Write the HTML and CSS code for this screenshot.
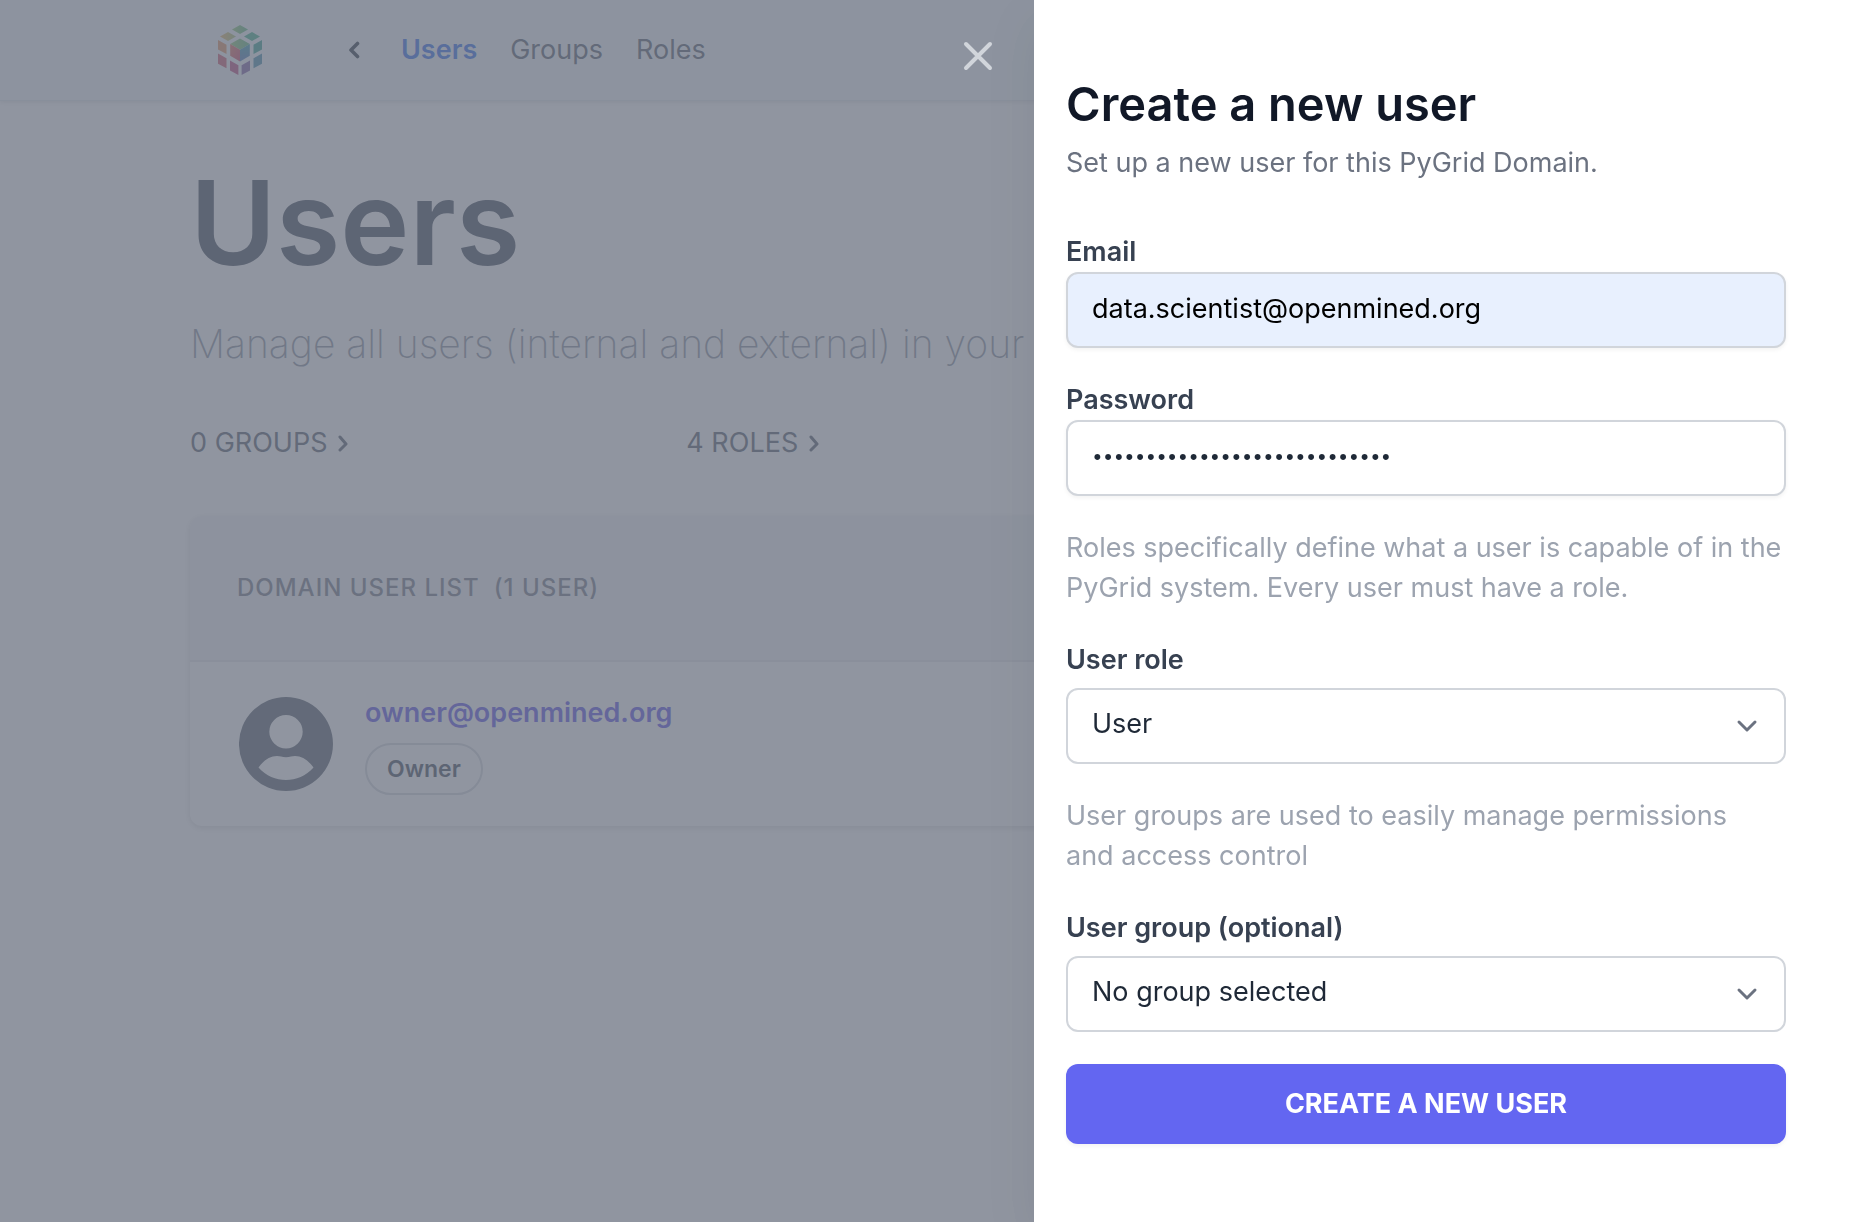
FILE: index.html
```html
<!DOCTYPE html>
<html lang="en">
<head>
<meta charset="utf-8">
<title>Users - PyGrid Domain</title>
<meta name="viewport" content="width=device-width, initial-scale=1">
<link rel="stylesheet" href="styles.css">
</head>
<body>
<div class="page">
  <header class="topbar">
    <a class="logo" href="#" aria-label="Home">
      <svg width="44" height="50" viewBox="0 0 44 50">
        <defs>
          <linearGradient id="lt" x1="0" x2="1"><stop offset="0" stop-color="#e8ae5c"/><stop offset="1" stop-color="#9cc070"/></linearGradient>
          <linearGradient id="tt" x1="0" x2="1"><stop offset="0" stop-color="#8cc46c"/><stop offset="1" stop-color="#52b47c"/></linearGradient>
          <linearGradient id="cl" x1="0" x2="1" y2="1"><stop offset="0" stop-color="#e07058"/><stop offset="1" stop-color="#c83c64"/></linearGradient>
          <linearGradient id="cr" x1="0" x2="0" y2="1"><stop offset="0" stop-color="#2c98a8"/><stop offset="1" stop-color="#4870b8"/></linearGradient>
        </defs>
        <path fill="url(#tt)" d="M22 0l8 4.500-8 4.500-8-4.500z"/>
        <path fill="url(#lt)" d="M10 7l8 4.500-8 4.500-8-4.500z"/>
        <path fill="#38ac84" d="M34 7l8 4.500-8 4.500-8-4.500z"/>
        <path fill="url(#tt)" d="M22 13.500l9.800 5.500-9.800 5.700-9.800-5.700z"/>
        <path fill="url(#cl)" d="M12.200 19l9.800 5.700v11.800l-9.800-5.800z"/>
        <path fill="url(#cr)" d="M31.800 19L22 24.700v11.800l9.800-5.800z"/>
        <path fill="#e08c58" d="M0 15l8.500 4.700v9.300L0 24.400z"/>
        <path fill="#cc5068" d="M0 28.600l8.500 4.700v10L0 38.700z"/>
        <path fill="#b84078" d="M12 35.500l8.400 4.700V50L12 45.400z"/>
        <path fill="#7858a0" d="M32 35.500l-8.400 4.700V50l8.400-4.600z"/>
        <path fill="#3c88a8" d="M44 28.600l-8.500 4.700v10l8.500-4.600z"/>
        <path fill="#2c9c8c" d="M44 15l-8.500 4.700v9.300l8.500-4.600z"/>
      </svg>
    </a>
    <nav class="nav">
      <a class="nav-back" href="#" aria-label="Back">
        <svg width="12" height="18" viewBox="0 0 12 18"><path d="M9.500 2.500L3 9l6.500 6.500" fill="none" stroke="currentColor" stroke-width="3.600" stroke-linecap="round" stroke-linejoin="round"/></svg>
      </a>
      <a class="nav-link is-active" href="#">Users</a>
      <a class="nav-link" href="#">Groups</a>
      <a class="nav-link" href="#">Roles</a>
    </nav>
  </header>
  <main class="content">
    <h1 class="title">Users</h1>
    <p class="lead">Manage all users (internal and external) in your domain</p>
    <div class="stats">
      <a class="stat" href="#">0 GROUPS
        <svg width="12" height="18" viewBox="0 0 12 18"><path d="M3 3l6 7-6 6" fill="none" stroke="currentColor" stroke-width="3" stroke-linecap="round" stroke-linejoin="round"/></svg></a>
      <a class="stat" href="#">4 ROLES
        <svg width="12" height="18" viewBox="0 0 12 18"><path d="M3 3l6 7-6 6" fill="none" stroke="currentColor" stroke-width="3" stroke-linecap="round" stroke-linejoin="round"/></svg></a>
    </div>
    <section class="card">
      <h2 class="card-head"><span>Domain user list</span><span>(1 user)</span></h2>
      <div class="user">
        <svg class="avatar" width="94" height="94" viewBox="0 0 94 94"><path fill="currentColor" fill-rule="evenodd" d="M47 0a47 47 0 1 0 0 94 47 47 0 0 0 0-94zm0 18a16.700 16.700 0 1 1 0 33.400A16.700 16.700 0 0 1 47 18zM19.500 70.500C25 63 31 59 38 59c3 0 5 1.200 9 1.200S53 59 56 59c7 0 13 4 18.500 11.500C67 79 57 83 47 83s-20-4-27.500-12.500z"/></svg>
        <div class="user-info">
          <a class="user-mail" href="#">owner@openmined.org</a>
          <span class="badge">Owner</span>
        </div>
      </div>
    </section>
  </main>
</div>

<div class="overlay">
  <button class="close" type="button" aria-label="Close panel">
    <svg width="32" height="32" viewBox="0 0 32 32"><path d="M4 4l24 24M28 4L4 28" stroke="currentColor" stroke-width="4" stroke-linecap="round"/></svg>
  </button>
  <aside class="drawer" role="dialog" aria-labelledby="drawer-title">
    <h2 class="drawer-title" id="drawer-title">Create a new user</h2>
    <p class="drawer-sub">Set up a new user for this PyGrid Domain.</p>
    <form class="form">
      <div class="field">
        <label for="email">Email</label>
        <input class="control control-filled" id="email" type="email" value="data.scientist@openmined.org">
      </div>
      <div class="field">
        <label for="password">Password</label>
        <input class="control control-password" id="password" type="password" value="abcdefghijklmnopqrstuvwxyz12">
      </div>
      <p class="help">Roles specifically define what a user is capable of in the PyGrid system. Every user must have a role.</p>
      <div class="field field-select">
        <label for="role">User role</label>
        <select class="control" id="role"><option>User</option></select>
      </div>
      <p class="help">User groups are used to easily manage permissions and&nbsp;access control</p>
      <div class="field field-select">
        <label for="group">User group (optional)</label>
        <select class="control" id="group"><option>No group selected</option></select>
      </div>
      <button class="submit" type="submit">CREATE A NEW USER</button>
    </form>
  </aside>
</div>
</body>
</html>
```

FILE: styles.css
```css
* { box-sizing: border-box; margin: 0; }
body {
  font-family: Inter, Roboto, sans-serif;
  font-size: 27px;
  line-height: 40px;
  color: #1f2937;
  background: #fff;
}
a { color: inherit; text-decoration: none; }
svg { display: block; flex: none; }
.page { height: 100vh; overflow: hidden; }

.topbar {
  display: flex;
  align-items: center;
  height: 101px;
  padding: 0 218px;
  background: #f3f8fb;
  border-bottom: 1px solid #e0e5ea;
  box-shadow: 0 2px 4px rgba(0, 0, 0, .1);
}
.nav { display: flex; align-items: center; gap: 33px; margin-left: 86px; color: #4b5563; }
.nav-back { margin-right: 8px; color: #1f2937; }
.is-active { color: #2563eb; font-weight: 600; }

.content { padding: 62px 190px; }
.title { font-size: 117px; line-height: 120px; font-weight: 600; color: #374151; }
.lead { margin-top: 33px; font-size: 39px; line-height: 56px; font-weight: 250; color: #858d9a; white-space: nowrap; }
.stats { display: grid; grid-template-columns: repeat(3, 1fr); gap: 20px; margin-top: 51px; color: #4b5563; }
.stat { display: flex; align-items: center; gap: 10px; }

.card { margin-top: 53px; border-radius: 12px; background: #fff; box-shadow: 0 2px 6px rgba(0, 0, 0, .15); }
.card-head {
  display: flex;
  align-items: center;
  gap: 14px;
  height: 146px;
  padding: 0 47px;
  border-bottom: 2px solid #e5e7eb;
  border-radius: 12px 12px 0 0;
  background: #f3f4f6;
  color: #6b7280;
  font-size: 24px;
  font-weight: 500;
  letter-spacing: 1px;
  text-transform: uppercase;
}
.user { display: flex; align-items: center; gap: 32px; padding: 31px 49px; color: #4b5563; }
.user-info { display: flex; flex-direction: column; align-items: flex-start; gap: 10px; }
.user-mail { color: #4f46e5; font-weight: 600; }
.badge {
  padding: 6px 20px;
  border: 2px solid #d1d5db;
  border-radius: 26px;
  color: #374151;
  font-size: 23px;
  line-height: 36px;
  font-weight: 600;
}

.overlay {
  position: fixed;
  inset: 0;
  display: flex;
  justify-content: flex-end;
  align-items: flex-start;
  background: rgba(107, 114, 128, .75);
}
.close { margin: 40px 40px 0 0; padding: 0; border: 0; background: none; color: #d1d5db; }
.drawer {
  width: 815px;
  max-width: 100%;
  min-height: 100%;
  padding: 72px 63px 72px 32px;
  background: #fff;
  box-shadow: 0 20px 50px rgba(0, 0, 0, .08);
}
.drawer-title { font-size: 47px; line-height: 64px; font-weight: 600; color: #111827; }
.drawer-sub { margin-top: 7px; color: #6b7280; }
.form { display: flex; flex-direction: column; gap: 32px; margin-top: 49px; }
.field { display: flex; flex-direction: column; }
.field-select { gap: 8px; }
.field label { font-weight: 600; color: #374151; }
.control {
  width: 100%;
  height: 76px;
  padding: 0 24px 4px;
  border: 2px solid #d1d5db;
  border-radius: 12px;
  background: #fff;
  color: #1f2937;
  font: inherit;
  box-shadow: 0 2px 4px rgba(0, 0, 0, .05);
}
.control-password { font-size: 19px; }
select.control {
  appearance: none;
  box-shadow: none;
  background: url("data:image/svg+xml,%3Csvg xmlns='http://www.w3.org/2000/svg' width='24' height='16' viewBox='0 0 24 16'%3E%3Cpath d='M4 4l8 8 8-8' fill='none' stroke='%236b7280' stroke-width='3' stroke-linecap='round' stroke-linejoin='round'/%3E%3C/svg%3E") no-repeat right 25px center;
}
.control-filled { background: #e8f0fe; color: #000; }
.help { color: #9ca3af; }
.submit {
  height: 80px;
  border: 0;
  border-radius: 12px;
  background: #6366f1;
  color: #fff;
  font: inherit;
  font-weight: 700;
  box-shadow: 0 2px 4px rgba(0, 0, 0, .05);
}
```
